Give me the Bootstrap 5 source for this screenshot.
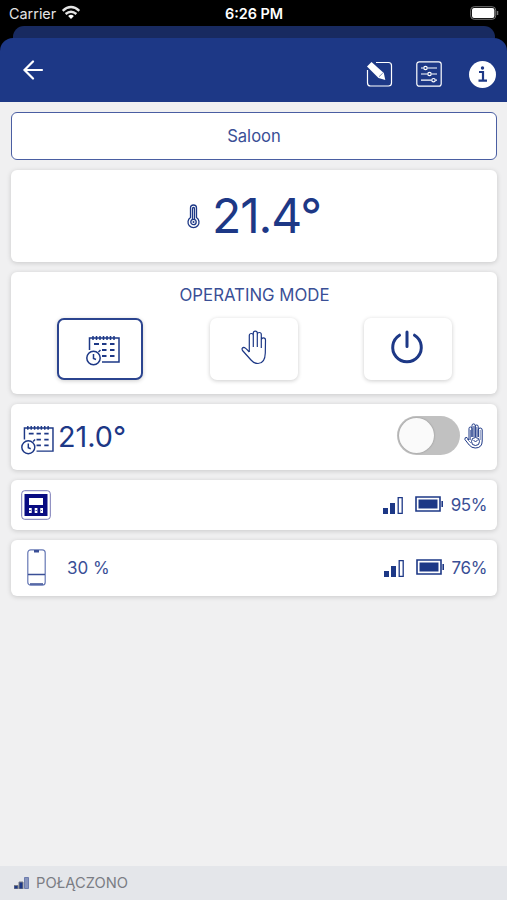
<!DOCTYPE html>
<html lang="en">
<head>
<meta charset="utf-8">
<meta name="viewport" content="width=device-width, initial-scale=1">
<title>Saloon</title>
<link href="https://cdn.jsdelivr.net/npm/bootstrap@5.3.0/dist/css/bootstrap.min.css" rel="stylesheet">
<style>
:root{--navy:#1d3886}
body{font-family:Inter,"Liberation Sans",sans-serif;background:#f0f0f1;color:var(--navy);height:900px;overflow:hidden}
svg{display:block;flex:none;fill:none;stroke:currentColor}
.top-area{background:#000;height:102px}
.status-row{height:26px;padding:1px 8px 0 9px;font-size:14.4px;color:#e4e4e4;display:grid;grid-template-columns:1fr auto 1fr}
.status-row .clock{font-weight:600;font-size:14.4px;color:#fff}
.sheet-back{height:12px;margin:0 12px 0 13px;background:#182a60;border-radius:11px 11px 0 0}
.app-head{height:64px;background:var(--navy);border-radius:13px 13px 0 0;color:#fff;padding:0 11px 0 22px}
.main-area{padding:10px 10px 0 11px;gap:10px}
.panel{background:#fff;border:0;border-radius:6px;box-shadow:0 1px 5px rgba(0,0,0,.17);color:var(--navy)}
.room{height:48px;border:1.5px solid #4a5ea2;box-shadow:none;font-size:16.6px;color:#3a4f96}
.now{height:92px;font-size:48px;line-height:1;letter-spacing:-1.1px}
.modes{height:122px;padding:14px 45px 0 46px}
.modes h1{font-size:16.8px;line-height:18px;margin:0 0 14px;color:#3a4f96;font-weight:400}
.mode{width:88px;height:62px;background:#fff;border:0;border-radius:7px;box-shadow:0 1px 4px rgba(0,0,0,.2);padding:0;color:var(--navy)}
.mode.on{border:2px solid #2b448f;width:86px}
.plan{height:66px;padding:0 13px 0 10px;font-size:28.8px}
.slide{width:63px;height:39px;border-radius:20px;background:#c1c1c1;padding:1.5px}
.slide span{display:block;width:35px;height:35px;border-radius:50%;background:#fafafa;box-shadow:0 0 2px rgba(0,0,0,.3)}
.dev{padding:0 10px;font-size:17px;color:#3a4f96}
.dev span{padding-top:2px}
.dev .pct{letter-spacing:-.4px;margin-left:7px}
.foot{height:34px;background:#e4e6ea;padding-left:14px;font-size:14.7px;color:#7b7d84}
</style>
</head>
<body class="d-flex flex-column">
<svg width="0" height="0" class="position-absolute">
<defs>
<symbol id="plan-icon" viewBox="0 0 34 31">
<path d="M3.500 15V3H33v24H16" stroke-width="1.500"/><path d="M7 1v4M10.500 1v4M14 1v4M17.500 1v4M21 1v4M24.500 1v4M28 1v4" stroke-width="1.500"/>
<path d="M8 9h5M16 9h4.500M24 9h4.500M16 15h4.500M24 15h4.500M16 21h4.500M24 21h4.500" stroke-width="1.800"/>
<circle cx="7.500" cy="23" r="6.700" stroke-width="1.500"/><path d="M7.500 19v4.500l2.500 1M12.500 17l2-2" stroke-width="1.500"/>
</symbol>
<symbol id="bars-icon" viewBox="0 0 20 17">
<path d="M0 11h5v6H0zM7 6h5v11H7z" fill="currentColor" stroke="none"/><path d="M15.200.7h4v15.600h-4z" stroke-width="1.300"/>
</symbol>
<symbol id="cell-icon" viewBox="0 0 29 16">
<path d="M1 1h24v14H1z" stroke-width="1.600"/><path d="M3.500 3.500h19v9h-19z" fill="currentColor" stroke="none"/><path d="M27.200 5v6" stroke-width="1.600"/>
</symbol>
</defs>
</svg>
<header class="top-area">
<div class="status-row align-items-center">
<div class="d-flex align-items-center"><span>Carrier</span>
<svg style="margin-left:5px;margin-top:-2px" width="20" height="15" viewBox="0 0 20 15" stroke="#fff" stroke-width="2.400"><path d="M1.700 5.800q8.300-7.400 16.600 0M4.600 9q5.400-4.600 10.800 0"/><path d="M10 14l-2.900-3q2.900-2.300 5.800 0z" fill="#fff" stroke="none"/></svg></div>
<span class="clock">6:26 PM</span>
<svg class="ms-auto" style="margin-top:-1px" width="29" height="14" viewBox="0 0 29 14"><rect x=".7" y=".7" width="25" height="12.600" rx="3.500" stroke="#777"/><rect x="2" y="2" width="22.400" height="10" rx="2" fill="#fff" stroke="none"/><path d="M27.500 5v4" stroke="#777" stroke-width="1.500"/></svg>
</div>
<div class="sheet-back"></div>
<nav class="app-head d-flex align-items-center">
<svg width="22" height="20" viewBox="0 0 22 20" stroke-width="2.200" stroke-linecap="round"><path d="M11 1.500L2.500 10l8.500 8.500M2.500 10H20"/></svg>
<svg class="ms-auto mt-2" width="27" height="27" viewBox="0 0 27 27"><path d="M10 1.500h12.500q3 0 3 3V22q0 3-3 3h-18q-3 0-3-3V9" stroke-width="1.200"/><path d="M1 5.500L5.500 1l12.300 11 1.500 7-6.800-2z" fill="#fff" stroke="none"/><path d="M13 15.700l3.800-3.600" stroke="#1d3886" stroke-width=".6"/></svg>
<svg class="mt-2" style="margin-left:23px;margin-bottom:1px" width="26" height="26" viewBox="0 0 26 26" stroke-width="1.200"><rect x=".8" y=".8" width="24.400" height="24.400" rx="2.500"/><path d="M5 7h2.500m4 0H21M5 13h6.500m4 0H21M5 19.200h10.500m4 0H21"/><circle cx="9.500" cy="7" r="1.700"/><circle cx="13.500" cy="13" r="1.700"/><circle cx="17.500" cy="19.200" r="1.700"/></svg>
<svg class="mt-2" style="margin-left:27px" width="27" height="27" viewBox="0 0 27 27"><circle cx="13.500" cy="13.500" r="13.500" fill="#fff" stroke="none"/><path d="M10 11h4v8.500M9.500 19.700h8.500" stroke="#1d3886" stroke-width="2.200"/><circle cx="13.500" cy="7" r="1.700" fill="#1d3886" stroke="none"/></svg>
</nav>
</header>
<main class="main-area d-flex flex-column flex-grow-1">
<div class="panel room d-flex align-items-center justify-content-center">Saloon</div>
<section class="panel now d-flex align-items-center justify-content-center">
<svg width="13" height="25" viewBox="0 0 13 25" stroke-width="1.300" style="margin-right:12px"><path d="M3.500 13.500V4a3 3 0 0 1 6 0v9.500a5.500 5.500 0 1 1-6 0z"/><path d="M5.500 15V4.500a1 1 0 0 1 2 0V15"/><circle cx="6.500" cy="18" r="2.700"/><circle cx="6.500" cy="18" r="1" fill="currentColor" stroke="none"/></svg>
<span>21.4°</span>
</section>
<section class="panel modes">
<h1 class="text-center">OPERATING MODE</h1>
<div class="d-flex justify-content-between">
<button class="mode on d-flex align-items-center justify-content-center"><svg width="34" height="31" style="margin-left:6px;margin-top:2px"><use href="#plan-icon"/></svg></button>
<button class="mode d-flex align-items-center justify-content-center"><svg width="27" height="35" viewBox="0 0 27 35" stroke-width="1.200" stroke-linejoin="round" style="margin:-3px 0 0 2px"><path d="M8.300 22V5.500a2 2 0 0 1 4 0V17M12.300 17V3.200a2 2 0 0 1 4 0V17M16.300 17V4.500a2 2 0 0 1 4 0V18M20.300 18V10a2 2 0 0 1 4.200 0L24.300 23Q24 33.500 17 33.500q-4 0-7-3.500L1.500 20.500q-1.300-2.500 1.200-3.200 1.500 0 5.600 4.700"/></svg></button>
<button class="mode d-flex align-items-center justify-content-center"><svg width="34" height="34" viewBox="0 0 34 34" stroke-width="3" stroke-linecap="round" style="margin-left:-2px;margin-top:-5px"><path d="M9.500 5.200a14.300 14.300 0 1 0 15 0M17 2v14.500"/></svg></button>
</div>
</section>
<section class="panel plan d-flex align-items-center">
<svg width="33" height="30" style="margin-top:5px"><use href="#plan-icon"/></svg><span style="margin-left:4px">21.0°</span>
<div class="slide ms-auto" style="margin-top:-3px"><span></span></div>
<svg style="margin:-3px 0 0 4px" width="20" height="26" viewBox="0 0 20 26" stroke-width="1"><path d="M5 17V5.500a1.400 1.400 0 0 1 3 0V14V2.500a1.600 1.600 0 0 1 3.200 0V14V3.500a1.500 1.500 0 0 1 3 0V14V7a1.600 1.600 0 0 1 4 0v11q0 7-7 7-3.500 0-6-3L.9 16.500Q.5 14 3 14.500z"/><path d="M6.500 7v10M9.600 3v11M12.700 4v10M16.200 7v10M3 16l4 4" stroke-width=".6"/><circle cx="11.500" cy="18.500" r="4" fill="#fff"/><path d="M9.500 17l2 2 2.500-2.500"/></svg>
</section>
<section class="panel dev d-flex align-items-center" style="height:50px">
<svg width="30" height="30" viewBox="0 0 30 30" style="margin-top:-1px"><rect x=".7" y=".7" width="28.600" height="28.600" rx="3" stroke="#7777b5"/><path d="M3.500 4h23v22h-23z" fill="#080b82" stroke="none"/><path d="M8 8h14v7H8zM8 18h2.700v5H8zM13.700 18h2.700v5h-2.700zM19.300 18H22v5h-2.700z" fill="#fff" stroke="none"/><path d="M8 20.500h2m4.500 0h1.500m4 0h1" stroke="#080b82" stroke-width=".7"/></svg>
<svg class="ms-auto" width="20" height="17" style="color:#1d3886"><use href="#bars-icon"/></svg>
<svg width="29" height="16" style="margin-left:12px;margin-top:-2px;color:#1d3886"><use href="#cell-icon"/></svg><span class="pct">95%</span>
</section>
<section class="panel dev d-flex align-items-center" style="height:56px">
<svg style="margin:-2px 0 0 6px" width="19" height="37" viewBox="0 0 19 37"><rect x=".8" y=".8" width="17.400" height="35.400" rx="3" stroke="#6678b5" stroke-width="1.200"/><path d="M1 25.500h17M3 35h13" stroke-width="1.500"/><path d="M7 1h5v2.500H7z" fill="currentColor" stroke="none"/></svg>
<span style="margin-left:21px">30 %</span>
<svg class="ms-auto" width="20" height="17" style="color:#1d3886"><use href="#bars-icon"/></svg>
<svg width="29" height="16" style="margin-left:12px;margin-top:-2px;color:#1d3886"><use href="#cell-icon"/></svg><span class="pct">76%</span>
</section>
</main>
<footer class="foot d-flex align-items-center"><svg width="15" height="12" viewBox="0 0 15 12" stroke="none"><path d="M0 8.500h4V12H0zM5 5h4v7H5z" fill="#1d3886"/><path d="M10.500.5h4v11h-4z" fill="#8794bd" stroke="#5a6ca5" stroke-width=".8"/></svg><span style="margin-left:7px">POŁĄCZONO</span></footer>
<script src="https://cdn.jsdelivr.net/npm/bootstrap@5.3.0/dist/js/bootstrap.bundle.min.js"></script>
</body>
</html>
